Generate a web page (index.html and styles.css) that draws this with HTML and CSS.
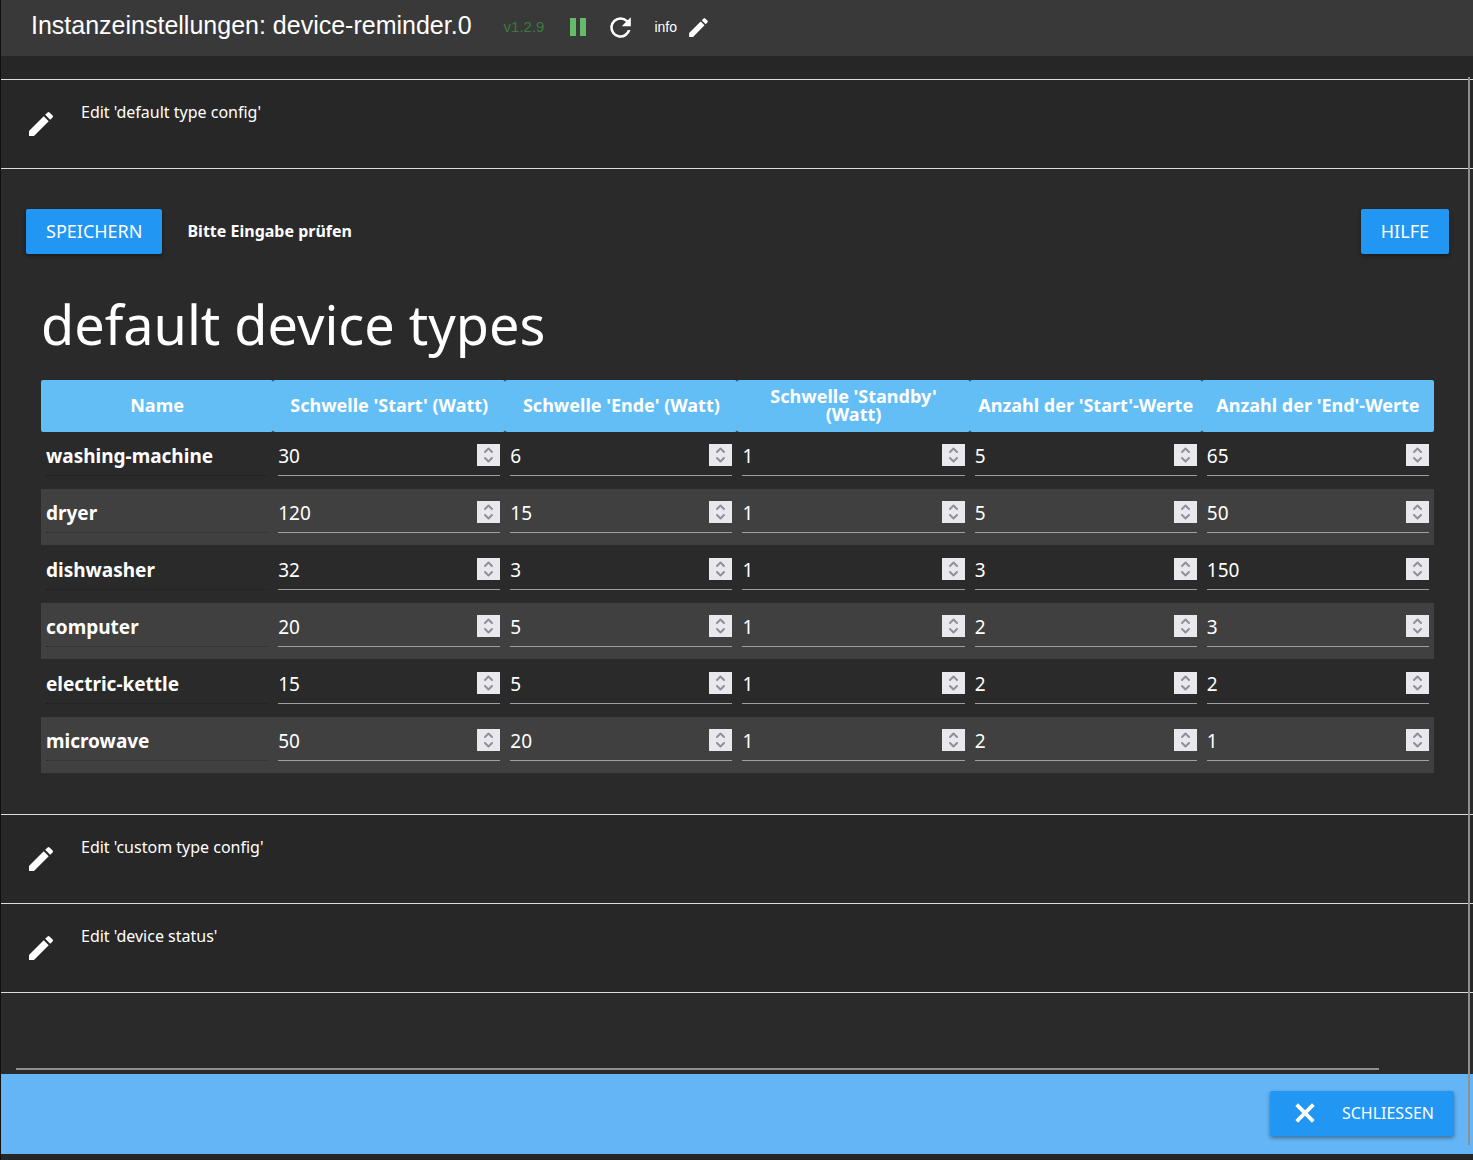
FILE: index.html
```html
<!DOCTYPE html>
<html lang="de">
<head>
<meta charset="utf-8">
<meta name="viewport" content="width=device-width, initial-scale=1">
<title>Instanzeinstellungen: device-reminder.0</title>
<link rel="stylesheet" href="styles.css">
</head>
<body>
<svg class="sprite" aria-hidden="true">
  <symbol id="pencil" viewBox="0 0 24 24"><path d="M3 17.250V21h3.750L17.810 9.940l-3.750-3.750L3 17.250zM20.710 7.040a1 1 0 0 0 0-1.410l-2.340-2.340a1 1 0 0 0-1.410 0l-1.830 1.830 3.750 3.750 1.830-1.830z"/></symbol>
  <symbol id="pause" viewBox="0 0 24 24"><path d="M4 3h6v18H4zM14 3h6v18h-6z"/></symbol>
  <symbol id="refresh" viewBox="0 0 24 24"><path d="M17.650 6.350A7.960 7.960 0 0 0 12 4a8 8 0 1 0 7.730 10h-2.080A6 6 0 1 1 12 6c1.660 0 3.140.69 4.220 1.780L13 11h7V4l-2.350 2.350z"/></symbol>
  <symbol id="close" viewBox="0 0 24 24"><path d="M19 6.410 17.590 5 12 10.590 6.410 5 5 6.410 10.590 12 5 17.590 6.410 19 12 13.410 17.590 19 19 17.590 13.410 12z"/></symbol>
</svg>
<div class="app">
  <header class="topbar">
    <h1 class="topbar-title">Instanzeinstellungen: device-reminder.0</h1>
    <span class="version">v1.2.9</span>
    <button class="icon-button pause" type="button" aria-label="Pause"><svg class="icon-pause"><use href="#pause"/></svg></button>
    <button class="icon-button refresh" type="button" aria-label="Neu starten"><svg class="icon-refresh"><use href="#refresh"/></svg></button>
    <button class="icon-button info" type="button">info <svg class="icon-small"><use href="#pencil"/></svg></button>
  </header>

  <main class="content">
    <section class="panel">
      <button class="panel-header" type="button"><svg class="icon-edit"><use href="#pencil"/></svg><span>Edit 'default type config'</span></button>
      <div class="panel-body">
        <div class="actions">
          <button class="button" type="button">SPEICHERN</button>
          <strong class="notice">Bitte Eingabe prüfen</strong>
          <button class="button help" type="button">HILFE</button>
        </div>
        <div class="types">
          <h2 class="types-title">default device types</h2>
          <table class="types-table">
            <thead>
              <tr><th>Name</th><th>Schwelle 'Start' (Watt)</th><th>Schwelle 'Ende' (Watt)</th><th>Schwelle 'Standby' (Watt)</th><th>Anzahl der 'Start'-Werte</th><th>Anzahl der 'End'-Werte</th></tr>
            </thead>
            <tbody>
              <tr>
                <th scope="row"><span class="name">washing-machine</span></th>
                <td><input type="number" value="30" aria-label="washing-machine Start"></td>
                <td><input type="number" value="6" aria-label="washing-machine Ende"></td>
                <td><input type="number" value="1" aria-label="washing-machine Standby"></td>
                <td><input type="number" value="5" aria-label="washing-machine Start-Werte"></td>
                <td><input type="number" value="65" aria-label="washing-machine End-Werte"></td>
              </tr>
              <tr>
                <th scope="row"><span class="name">dryer</span></th>
                <td><input type="number" value="120" aria-label="dryer Start"></td>
                <td><input type="number" value="15" aria-label="dryer Ende"></td>
                <td><input type="number" value="1" aria-label="dryer Standby"></td>
                <td><input type="number" value="5" aria-label="dryer Start-Werte"></td>
                <td><input type="number" value="50" aria-label="dryer End-Werte"></td>
              </tr>
              <tr>
                <th scope="row"><span class="name">dishwasher</span></th>
                <td><input type="number" value="32" aria-label="dishwasher Start"></td>
                <td><input type="number" value="3" aria-label="dishwasher Ende"></td>
                <td><input type="number" value="1" aria-label="dishwasher Standby"></td>
                <td><input type="number" value="3" aria-label="dishwasher Start-Werte"></td>
                <td><input type="number" value="150" aria-label="dishwasher End-Werte"></td>
              </tr>
              <tr>
                <th scope="row"><span class="name">computer</span></th>
                <td><input type="number" value="20" aria-label="computer Start"></td>
                <td><input type="number" value="5" aria-label="computer Ende"></td>
                <td><input type="number" value="1" aria-label="computer Standby"></td>
                <td><input type="number" value="2" aria-label="computer Start-Werte"></td>
                <td><input type="number" value="3" aria-label="computer End-Werte"></td>
              </tr>
              <tr>
                <th scope="row"><span class="name">electric-kettle</span></th>
                <td><input type="number" value="15" aria-label="electric-kettle Start"></td>
                <td><input type="number" value="5" aria-label="electric-kettle Ende"></td>
                <td><input type="number" value="1" aria-label="electric-kettle Standby"></td>
                <td><input type="number" value="2" aria-label="electric-kettle Start-Werte"></td>
                <td><input type="number" value="2" aria-label="electric-kettle End-Werte"></td>
              </tr>
              <tr>
                <th scope="row"><span class="name">microwave</span></th>
                <td><input type="number" value="50" aria-label="microwave Start"></td>
                <td><input type="number" value="20" aria-label="microwave Ende"></td>
                <td><input type="number" value="1" aria-label="microwave Standby"></td>
                <td><input type="number" value="2" aria-label="microwave Start-Werte"></td>
                <td><input type="number" value="1" aria-label="microwave End-Werte"></td>
              </tr>
            </tbody>
          </table>
        </div>
      </div>
    </section>
    <section class="panel">
      <button class="panel-header" type="button"><svg class="icon-edit"><use href="#pencil"/></svg><span>Edit 'custom type config'</span></button>
    </section>
    <section class="panel">
      <button class="panel-header" type="button"><svg class="icon-edit"><use href="#pencil"/></svg><span>Edit 'device status'</span></button>
    </section>
    <div class="spacer"><div class="scroll-x"></div></div>
  </main>

  <footer class="footer">
    <button class="button close" type="button"><svg class="icon-close"><use href="#close"/></svg>SCHLIESSEN</button>
  </footer>
  <div class="scroll-y"></div>
</div>
</body>
</html>
```
FILE: styles.css
```css
* { box-sizing: border-box; }

body {
  margin: 0;
  background: #262626;
  color: #fff;
  font: 16px/24px "Noto Sans", "Open Sans", sans-serif;
}

button {
  border: 0;
  padding: 0;
  background: none;
  color: inherit;
  font: inherit;
  cursor: pointer;
}

svg { display: block; fill: currentColor; }
.sprite { position: absolute; width: 0; height: 0; }

.app {
  position: relative;
  display: flex;
  flex-direction: column;
  min-height: 100vh;
  padding-bottom: 6px;
  border-left: 1px solid #101010;
}

/* Top bar */
.topbar {
  display: flex;
  align-items: center;
  height: 56px;
  padding: 0 30px 2px;
  background: #393939;
  font-family: "Liberation Sans", Arial, sans-serif;
  font-size: 14px;
}
.topbar-title { margin: 0 32px 4px 0; font-size: 25px; line-height: 32px; font-weight: 400; }
.version { color: #397a3d; font-size: 15px; }
.icon-button { display: flex; align-items: center; }
.pause { margin-left: 22px; color: #66bb6a; }
.refresh { margin-left: 15px; }
.info { margin-left: 18px; gap: 9px; }
.icon-pause { width: 24px; height: 24px; }
.icon-refresh { width: 31px; height: 31px; }
.icon-small { width: 25px; height: 25px; }

/* Panels */
.content { flex: 1; display: flex; flex-direction: column; padding-top: 23px; background: #262626; }
.panel { border-top: 1px solid #dcdcdc; }
.panel-header {
  display: flex;
  gap: 24px;
  width: 100%;
  height: 88px;
  padding: 20px 24px;
  background: #272727;
  text-align: left;
}
.icon-edit { width: 32px; height: 32px; margin-top: 8px; }
.panel-body { padding: 40px 24px 40px 25px; border-top: 1px solid #dcdcdc; background: #2a2a2a; }

.actions { display: flex; align-items: center; gap: 25px; }
.button {
  height: 45px;
  padding: 0 20px 2px;
  border-radius: 2px;
  background: #2196f3;
  box-shadow: 0 2px 4px rgba(0, 0, 0, .4);
  font-size: 18px;
}
.notice { padding-bottom: 2px; }
.help { margin-left: auto; }

/* Device type table */
.types { padding: 30px 15px 0; }
.types-title { margin: 0 0 16px; font-size: 54px; line-height: 80px; font-weight: 400; }
.types-table { width: 100%; table-layout: fixed; border-spacing: 0; font-size: 19px; }
.types-table th, .types-table td { padding: 0 5px; vertical-align: top; }
.types-table thead th {
  height: 52px;
  padding-bottom: 2px;
  border-radius: 2px;
  background: #64bef6;
  font-size: 18px;
  line-height: 18px;
  text-align: center;
  vertical-align: middle;
}
.types-table tbody th, .types-table tbody td { height: 57px; border-bottom: 1px solid #2a2a2a; }
.types-table tbody tr:nth-child(even) { background: #404040; }
.types-table tbody th { text-align: left; }
.name { display: block; height: 44px; padding-top: 3px; border-bottom: 1px dotted rgba(0, 0, 0, .3); line-height: 43px; }
.types-table input {
  display: block;
  width: 100%;
  height: 44px;
  padding: 5px 30px 0 0;
  border: 0;
  border-bottom: 1px solid #9e9e9e;
  border-radius: 0;
  background: url("data:image/svg+xml,%3Csvg xmlns='http://www.w3.org/2000/svg' width='23' height='22'%3E%3Cpath fill='%23e9e9ed' d='M0 0h23v22H0z'/%3E%3Cpath fill='none' stroke='%238f8f9d' stroke-width='2' stroke-linecap='round' stroke-linejoin='round' d='M8 8l3.500-3.500L15 8M8 14l3.500 3.500L15 14'/%3E%3C/svg%3E") no-repeat right 12px;
  color: #fff;
  font: 19px/24px "Noto Sans", "Open Sans", sans-serif;
  outline: 0;
  appearance: textfield;
}
.types-table input::-webkit-inner-spin-button { appearance: none; margin: 0; }

/* Bottom area */
.spacer { flex: 1; display: flex; align-items: flex-end; min-height: 82px; padding: 0 94px 4px 15px; border-top: 1px solid #dcdcdc; background: #2a2a2a; }
.scroll-x { width: 100%; height: 2px; background: #8f8f8f; }
.footer {
  display: flex;
  justify-content: flex-end;
  align-items: center;
  height: 80px;
  padding: 0 19px 2px;
  background: #64b5f6;
}
.close { display: flex; align-items: center; gap: 22px; padding-bottom: 0; font-size: 16px; }
.icon-close { width: 30px; height: 30px; stroke: currentColor; stroke-width: 1px; }

/* Scroll indicator drawn over the page edge */
.scroll-y { position: absolute; top: 77px; right: 3px; bottom: 15px; width: 2px; background: #8f8f8f; }
```
